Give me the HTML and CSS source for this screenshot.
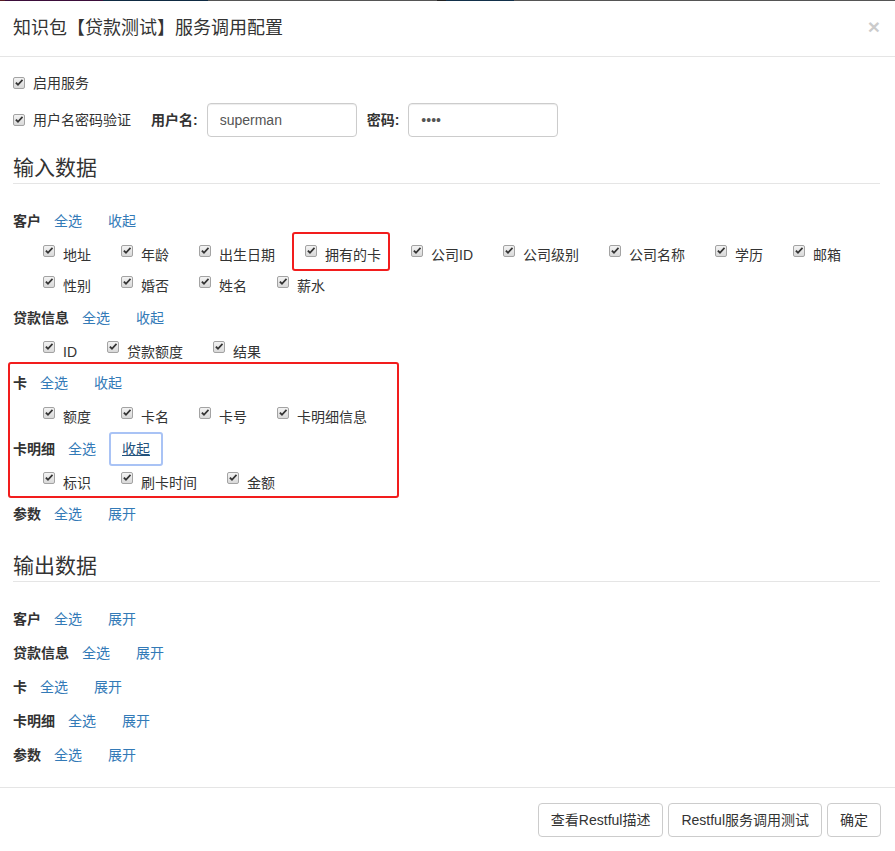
FILE: index.html
```html
<!DOCTYPE html>
<html lang="zh-CN">
<head>
    <meta charset="UTF-8">
    <meta name="viewport" content="width=device-width, initial-scale=1.0">
    <title>服务调用配置</title>
    <link rel="stylesheet" href="styles.css">
</head>
<body>
    <svg class="defs" width="0" height="0">
        <symbol id="chk" viewBox="0 0 10 10">
            <path d="M1.2 5.3 L2.6 3.9 L4 5.4 L7.9 1.3 L9.1 2.6 L4 8 Z" fill="#333"/>
        </symbol>
    </svg>

    <div class="backdrop-strip"></div>

    <div class="modal">
        <div class="modal-header">
            <button class="close" type="button">&times;</button>
            <h4 class="modal-title">知识包【贷款测试】服务调用配置</h4>
        </div>

        <div class="modal-body">
            <div class="check-row">
                <span class="cb"><svg><use href="#chk"/></svg></span>启用服务
            </div>
            <div class="check-row auth-row">
                <span class="cb"><svg><use href="#chk"/></svg></span>用户名密码验证
                <label class="field-label">用户名:</label>
                <input class="form-control" type="text" value="superman">
                <label class="field-label">密码:</label>
                <input class="form-control" type="password" value="1234">
            </div>

            <legend class="section-title first">输入数据</legend>

            <div class="group">
                <div class="group-head">
                    <span class="group-name">客户</span>
                    <a class="btn-link">全选</a><a class="btn-link">收起</a>
                </div>
                <div class="items">
                    <label class="item"><span class="cb"><svg><use href="#chk"/></svg></span>地址</label>
                    <label class="item"><span class="cb"><svg><use href="#chk"/></svg></span>年龄</label>
                    <label class="item"><span class="cb"><svg><use href="#chk"/></svg></span>出生日期</label>
                    <label class="item marked"><span class="cb"><svg><use href="#chk"/></svg></span>拥有的卡</label>
                    <label class="item"><span class="cb"><svg><use href="#chk"/></svg></span>公司ID</label>
                    <label class="item"><span class="cb"><svg><use href="#chk"/></svg></span>公司级别</label>
                    <label class="item"><span class="cb"><svg><use href="#chk"/></svg></span>公司名称</label>
                    <label class="item"><span class="cb"><svg><use href="#chk"/></svg></span>学历</label>
                    <label class="item"><span class="cb"><svg><use href="#chk"/></svg></span>邮箱</label>
                    <label class="item"><span class="cb"><svg><use href="#chk"/></svg></span>性别</label>
                    <label class="item"><span class="cb"><svg><use href="#chk"/></svg></span>婚否</label>
                    <label class="item"><span class="cb"><svg><use href="#chk"/></svg></span>姓名</label>
                    <label class="item"><span class="cb"><svg><use href="#chk"/></svg></span>薪水</label>
                </div>
            </div>

            <div class="group">
                <div class="group-head">
                    <span class="group-name">贷款信息</span>
                    <a class="btn-link">全选</a><a class="btn-link">收起</a>
                </div>
                <div class="items">
                    <label class="item"><span class="cb"><svg><use href="#chk"/></svg></span>ID</label>
                    <label class="item"><span class="cb"><svg><use href="#chk"/></svg></span>贷款额度</label>
                    <label class="item"><span class="cb"><svg><use href="#chk"/></svg></span>结果</label>
                </div>
            </div>

            <div class="mark-block">
                <div class="group">
                    <div class="group-head">
                        <span class="group-name">卡</span>
                        <a class="btn-link">全选</a><a class="btn-link">收起</a>
                    </div>
                    <div class="items">
                        <label class="item"><span class="cb"><svg><use href="#chk"/></svg></span>额度</label>
                        <label class="item"><span class="cb"><svg><use href="#chk"/></svg></span>卡名</label>
                        <label class="item"><span class="cb"><svg><use href="#chk"/></svg></span>卡号</label>
                        <label class="item"><span class="cb"><svg><use href="#chk"/></svg></span>卡明细信息</label>
                    </div>
                </div>

                <div class="group">
                    <div class="group-head">
                        <span class="group-name">卡明细</span>
                        <a class="btn-link">全选</a><a class="btn-link focused">收起</a>
                    </div>
                    <div class="items">
                        <label class="item"><span class="cb"><svg><use href="#chk"/></svg></span>标识</label>
                        <label class="item"><span class="cb"><svg><use href="#chk"/></svg></span>刷卡时间</label>
                        <label class="item"><span class="cb"><svg><use href="#chk"/></svg></span>金额</label>
                    </div>
                </div>
            </div>

            <div class="group collapsed">
                <div class="group-head">
                    <span class="group-name">参数</span>
                    <a class="btn-link">全选</a><a class="btn-link">展开</a>
                </div>
            </div>

            <legend class="section-title">输出数据</legend>

            <div class="group collapsed">
                <div class="group-head">
                    <span class="group-name">客户</span>
                    <a class="btn-link">全选</a><a class="btn-link">展开</a>
                </div>
            </div>
            <div class="group collapsed">
                <div class="group-head">
                    <span class="group-name">贷款信息</span>
                    <a class="btn-link">全选</a><a class="btn-link">展开</a>
                </div>
            </div>
            <div class="group collapsed">
                <div class="group-head">
                    <span class="group-name">卡</span>
                    <a class="btn-link">全选</a><a class="btn-link">展开</a>
                </div>
            </div>
            <div class="group collapsed">
                <div class="group-head">
                    <span class="group-name">卡明细</span>
                    <a class="btn-link">全选</a><a class="btn-link">展开</a>
                </div>
            </div>
            <div class="group collapsed">
                <div class="group-head">
                    <span class="group-name">参数</span>
                    <a class="btn-link">全选</a><a class="btn-link">展开</a>
                </div>
            </div>
        </div>

        <div class="modal-footer">
            <button class="btn" type="button">查看Restful描述</button>
            <button class="btn" type="button">Restful服务调用测试</button>
            <button class="btn" type="button">确定</button>
        </div>
    </div>
</body>
</html>
```

FILE: styles.css
```css
html {
    overflow: hidden;
}

body {
    margin: 0;
    padding: 0;
    font-family: "Liberation Sans", "Noto Sans CJK SC", sans-serif;
    font-size: 14px;
    line-height: 20px;
    color: #333;
    background-color: #fff;
}

.defs {
    position: absolute;
}

.backdrop-strip {
    height: 1px;
    background: linear-gradient(to right,
        #5a1d24 0, #5a1d24 5px,
        #3b0d3a 5px, #3b0d3a 103px,
        #0e2a42 103px, #0e2a42 208px,
        #555 208px, #555 437px,
        #222 437px, #222 446px,
        #12304a 446px, #12304a 514px,
        #555 514px);
}

/* header */
.modal-header {
    padding: 14px 15px 15px 13px;
    border-bottom: 1px solid #e5e5e5;
}

.modal-title {
    margin: 0;
    font-size: 18px;
    font-weight: normal;
    line-height: 26px;
}

.close {
    float: right;
    margin-top: 1px;
    padding: 0;
    border: 0;
    background: transparent;
    font-family: "Liberation Sans", sans-serif;
    font-size: 21px;
    font-weight: bold;
    line-height: 21px;
    color: #000;
    opacity: 0.2;
    cursor: pointer;
}

/* body */
.modal-body {
    padding: 16px 15px 8px 13px;
}

.check-row {
    display: flex;
    align-items: center;
    height: 20px;
}

.auth-row {
    height: 34px;
    margin-top: 10px;
}

.cb {
    display: inline-flex;
    align-items: center;
    justify-content: center;
    box-sizing: border-box;
    width: 12px;
    height: 12px;
    margin-right: 8px;
    border: 1px solid #a3a3a3;
    border-radius: 2px;
    background: linear-gradient(#f3f3f3, #d9d9d9);
    flex-shrink: 0;
}

.cb svg {
    width: 10px;
    height: 10px;
}

.field-label {
    margin-left: 20px;
    margin-right: 9px;
    font-weight: bold;
}

.auth-row .form-control + .field-label {
    margin-left: 10px;
}

.form-control {
    box-sizing: border-box;
    width: 150px;
    height: 34px;
    padding: 6px 12px;
    font-family: inherit;
    font-size: 14px;
    color: #555;
    background-color: #fff;
    border: 1px solid #ccc;
    border-radius: 4px;
    box-shadow: inset 0 1px 1px rgba(0, 0, 0, 0.075);
}

.section-title {
    display: block;
    width: 100%;
    margin: 27px 0 27px;
    padding: 0;
    font-size: 21px;
    line-height: 30px;
    color: #333;
    border-bottom: 1px solid #e5e5e5;
}

.section-title.first {
    margin-top: 16px;
}

/* groups */
.group-head {
    display: flex;
    align-items: center;
    height: 20px;
}

.group-name {
    font-weight: bold;
}

.btn-link {
    display: inline-block;
    margin: -7px 0;
    padding: 6px 12px;
    border: 1px solid transparent;
    color: #337ab7;
    text-decoration: none;
    cursor: pointer;
}

.btn-link.focused {
    padding: 5px 11px;
    border: 2px solid #a9c3f5;
    border-radius: 3px;
    color: #23527c;
    text-decoration: underline;
}

.items {
    display: flex;
    flex-wrap: wrap;
    padding: 8.5px 0 6px 30px;
}

.item {
    display: inline-flex;
    align-items: center;
    height: 31px;
    margin-right: 30px;
}

.item .cb {
    margin-bottom: 9px;
}

.group.collapsed {
    margin-bottom: 14px;
}

/* annotation boxes */
.marked {
    position: relative;
}

.marked::after {
    content: "";
    position: absolute;
    top: -8px;
    bottom: 0;
    left: -13px;
    right: -9px;
    border: 2px solid #f21d1d;
    border-radius: 3px;
}

.mark-block {
    position: relative;
}

.mark-block::after {
    content: "";
    position: absolute;
    top: -11px;
    bottom: 6px;
    left: -5px;
    width: 387px;
    border: 2px solid #f21d1d;
    border-radius: 3px;
}

/* footer */
.modal-footer {
    display: flex;
    justify-content: flex-end;
    gap: 5px;
    padding: 15px 14px 14px;
    border-top: 1px solid #e5e5e5;
}

.btn {
    height: 34px;
    padding: 6px 12px;
    font-family: inherit;
    font-size: 14px;
    line-height: 20px;
    color: #333;
    background-color: #fff;
    border: 1px solid #ccc;
    border-radius: 4px;
    cursor: pointer;
}
```
